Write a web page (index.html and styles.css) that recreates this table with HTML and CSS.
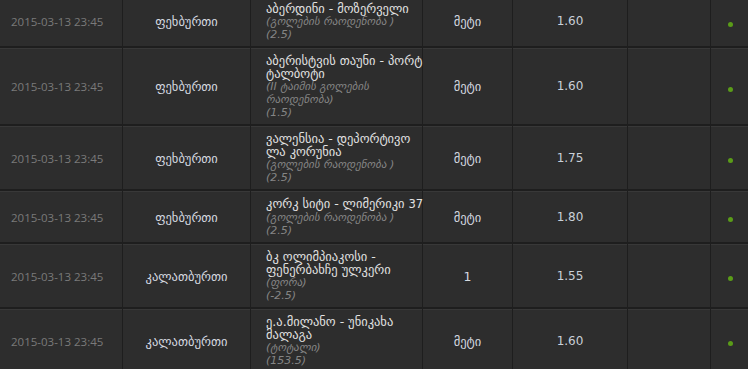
FILE: index.html
```html
<!DOCTYPE html>
<html lang="ka">
<head>
<meta charset="utf-8">
<link rel="stylesheet" href="styles.css">
</head>
<body>
<div class="viewport">
<table class="bets">
  <colgroup>
    <col class="c-date"><col class="c-sport"><col class="c-event"><col class="c-pick"><col class="c-odds"><col class="c-blank"><col class="c-status">
  </colgroup>
  <tbody>
    <tr>
      <td class="date">2015-03-13 23:45</td>
      <td class="sport">ფეხბურთი</td>
      <td class="event"><div class="name">აბერდინი - მოზერველი</div><div class="market">(გოლების რაოდენობა )</div><div class="market">(2.5)</div></td>
      <td class="pick">მეტი</td>
      <td class="odds">1.60</td>
      <td class="blank"></td>
      <td class="status"><span class="dot"></span></td>
    </tr>
    <tr>
      <td class="date">2015-03-13 23:45</td>
      <td class="sport">ფეხბურთი</td>
      <td class="event"><div class="name">აბერისტვის თაუნი - პორტ<br>ტალბოტი</div><div class="market">(II ტაიმის გოლების<br>რაოდენობა)</div><div class="market">(1.5)</div></td>
      <td class="pick">მეტი</td>
      <td class="odds">1.60</td>
      <td class="blank"></td>
      <td class="status"><span class="dot"></span></td>
    </tr>
    <tr>
      <td class="date">2015-03-13 23:45</td>
      <td class="sport">ფეხბურთი</td>
      <td class="event"><div class="name">ვალენსია - დეპორტივო<br>ლა კორუნია</div><div class="market">(გოლების რაოდენობა )</div><div class="market">(2.5)</div></td>
      <td class="pick">მეტი</td>
      <td class="odds">1.75</td>
      <td class="blank"></td>
      <td class="status"><span class="dot"></span></td>
    </tr>
    <tr>
      <td class="date">2015-03-13 23:45</td>
      <td class="sport">ფეხბურთი</td>
      <td class="event"><div class="name">კორკ სიტი - ლიმერიკი <span class="num">37</span></div><div class="market">(გოლების რაოდენობა )</div><div class="market">(2.5)</div></td>
      <td class="pick">მეტი</td>
      <td class="odds">1.80</td>
      <td class="blank"></td>
      <td class="status"><span class="dot"></span></td>
    </tr>
    <tr>
      <td class="date">2015-03-13 23:45</td>
      <td class="sport">კალათბურთი</td>
      <td class="event"><div class="name">ბკ ოლიმპიაკოსი -<br>ფენერბახჩე ულკერი</div><div class="market">(ფორა)</div><div class="market">(-2.5)</div></td>
      <td class="pick">1</td>
      <td class="odds">1.55</td>
      <td class="blank"></td>
      <td class="status"><span class="dot"></span></td>
    </tr>
    <tr>
      <td class="date">2015-03-13 23:45</td>
      <td class="sport">კალათბურთი</td>
      <td class="event"><div class="name">ე.ა.მილანო - უნიკახა<br>მალაგა</div><div class="market">(ტოტალი)</div><div class="market">(153.5)</div></td>
      <td class="pick">მეტი</td>
      <td class="odds">1.60</td>
      <td class="blank"></td>
      <td class="status"><span class="dot"></span></td>
    </tr>
  </tbody>
</table>
</div>
</body>
</html>
```

FILE: styles.css
```css
html, body {
  margin: 0;
  padding: 0;
  background: #1f1f1f;
}
.viewport {
  width: 748px;
  height: 369px;
  overflow: hidden;
}
.bets {
  border-collapse: separate;
  border-spacing: 1px 2px;
  table-layout: fixed;
  width: 750px;
  margin: -6px 0 0 -1px;
  background: #1e1e1e;
  font-family: "DejaVu Sans", sans-serif;
  font-size: 12.5px;
  line-height: 13px;
  color: #dcdcdc;
}
.c-date { width: 122px; }
.c-sport { width: 127px; }
.c-event { width: 171px; }
.c-pick { width: 89px; }
.c-odds { width: 114px; }
.c-blank { width: 82px; }
.c-status { width: 38px; }
.bets td {
  background: #2d2d2d;
  border-top: 1px solid #383838;
  padding: 5px 0 5px;
  vertical-align: middle;
  text-align: center;
}
.bets td.date {
  text-align: left;
  padding-left: 11px;
  font-family: "Open Sans", sans-serif;
  font-size: 11.5px;
  color: #7a7a7a;
}
.bets td.sport {
  color: #d6dae0;
}
.bets td.event {
  text-align: left;
  padding-left: 15px;
  padding-right: 0;
}
.name {
  color: #e2e2e2;
  white-space: nowrap;
}
.num {
  font-size: 11.5px;
}
.market {
  font-style: italic;
  font-size: 11px;
  color: #858585;
  white-space: nowrap;
}
.bets td.pick {
  color: #d6dae0;
}
.bets td.odds {
  font-size: 12px;
  color: #c9d0d8;
}
.dot {
  display: inline-block;
  width: 5px;
  height: 5px;
  border-radius: 50%;
  background: #5a9c18;
  vertical-align: middle;
  margin-top: 3px;
}
```
